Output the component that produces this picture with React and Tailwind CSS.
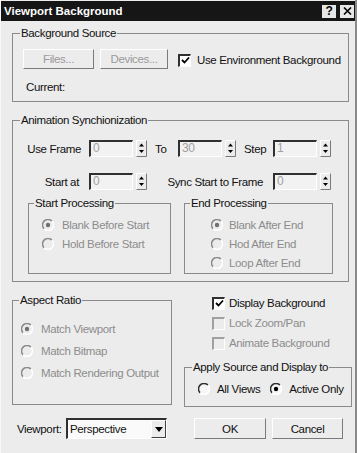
import React from "react";

const FONT = { fontFamily: '"Liberation Sans", Arial, sans-serif' };

function Radio({ checked, disabled }) {
  const dark = disabled ? "#8a8a8a" : "#303030";
  return (
    <svg width="12" height="12" viewBox="0 0 12 12" className="shrink-0">
      <circle cx="6" cy="6" r="5" fill={disabled ? "#ececec" : "#f6f6f6"} />
      <path d="M9.9 2.1 A5.5 5.5 0 0 0 2.1 9.9" stroke={dark} strokeWidth="1.5" fill="none" />
      <path d="M9.9 2.1 A5.5 5.5 0 0 1 2.1 9.9" stroke="#ffffff" strokeWidth="1.5" fill="none" />
      {checked && <circle cx="6" cy="6" r="2.2" fill={disabled ? "#707070" : "#000000"} />}
    </svg>
  );
}

function Check({ checked, disabled }) {
  return (
    <div
      className={
        disabled
          ? "w-[13px] h-[13px] shrink-0 border-t-2 border-l-2 border-b border-r border-t-[#a0a0a0] border-l-[#a0a0a0] border-b-white border-r-white bg-[#ececec]"
          : "w-[13px] h-[13px] shrink-0 border-t-2 border-l-2 border-b border-r border-t-[#303030] border-l-[#303030] border-b-white border-r-white bg-white flex items-center justify-center"
      }
    >
      {checked && (
        <svg width="9" height="9" viewBox="0 0 9 9">
          <path d="M1 4 L3.5 6.5 L8 1.5" stroke="#000" strokeWidth="1.8" fill="none" />
        </svg>
      )}
    </div>
  );
}

function Arrows() {
  return (
    <svg width="11" height="17" viewBox="0 0 11 17" className="shrink-0">
      <rect x="0" y="0" width="11" height="17" fill="#ececec" />
      <path d="M0.5 16.5 V0.5 H10.5" stroke="#ffffff" fill="none" />
      <path d="M10.5 0.5 V16.5 H0.5" stroke="#7a7a7a" fill="none" />
      <path d="M5.5 3.5 L8 6.5 H3 Z" fill="#000" />
      <path d="M3 10 H8 L5.5 13 Z" fill="#000" />
    </svg>
  );
}

function Spinner({ value }) {
  return (
    <div className="flex items-center gap-[3px] shrink-0">
      <div className="w-[44px] h-[17px] border-t-2 border-l-2 border-b border-r border-t-[#303030] border-l-[#303030] border-b-white border-r-white bg-[#f2f2f2] text-[#a0a0a0] text-[12px] leading-[12px] pl-[2px]">
        {value}
      </div>
      <Arrows />
    </div>
  );
}

function Btn({ children, w, disabled }) {
  return (
    <div
      className={`${w} h-[20px] shrink-0 flex items-center justify-center border border-t-white border-l-white border-b-[#7a7a7a] border-r-[#7a7a7a] bg-[#ececec] ${
        disabled ? "text-[#9a9a9a]" : "text-[#111111]"
      }`}
    >
      {children}
    </div>
  );
}

export default function App() {
  return (
    <div
      style={FONT}
      className="w-[357px] h-[453px] bg-[#ececec] overflow-hidden flex flex-col text-[11.5px] tracking-[-0.35px] leading-[14px] whitespace-nowrap text-[#111111] border-l border-l-[#f8f8f8] border-r-2 border-r-[#8a8a8a]"
    >
      {/* Title bar */}
      <div className="mt-[1px] h-[20px] bg-[#161616] flex items-center pl-[3px] pr-[1px] shrink-0">
        <span className="text-white font-bold text-[11.5px] tracking-normal flex-1">Viewport Background</span>
        <div className="w-[14px] h-[13px] bg-[#e6e6e6] flex items-center justify-center text-black font-bold text-[12px] leading-[12px]">
          ?
        </div>
        <div className="ml-[4px] w-[14px] h-[13px] bg-[#e6e6e6] flex items-center justify-center">
          <svg width="9" height="8" viewBox="0 0 9 8">
            <path d="M1 0.5 L8 7.5 M8 0.5 L1 7.5" stroke="#000" strokeWidth="1.6" />
          </svg>
        </div>
      </div>

      <div className="pl-[11px] pr-[6px] pt-[5px] flex flex-col">
        {/* Background Source */}
        <fieldset className="h-[76px] border border-[#8a8a8a] px-[7px]">
          <legend className="px-[1px] leading-[14px]">Background Source</legend>
          <div className="ml-[3px] mt-[9px] flex items-center">
            <Btn w="w-[71px]" disabled>Files...</Btn>
            <div className="ml-[6px]">
              <Btn w="w-[68px]" disabled>Devices...</Btn>
            </div>
            <div className="ml-[10px] mt-[2px]">
              <Check checked />
            </div>
            <span className="ml-[6px] mt-[2px]">Use Environment Background</span>
          </div>
          <div className="ml-[6px] mt-[11px]">Current:</div>
        </fieldset>

        {/* Animation Synchronization */}
        <fieldset className="mt-[11px] h-[169px] border border-[#8a8a8a] px-[7px]">
          <legend className="px-[1px] leading-[14px]">Animation Synchionization</legend>
          <div className="mt-[13px] flex items-center">
            <span className="w-[61px] text-right">Use Frame</span>
            <span className="ml-[8px]">
              <Spinner value="0" />
            </span>
            <span className="w-[31px] pl-[8px]">To</span>
            <Spinner value="30" />
            <span className="w-[37px] pl-[8px]">Step</span>
            <Spinner value="1" />
          </div>
          <div className="mt-[16px] flex items-center">
            <span className="w-[59px] text-right">Start at</span>
            <span className="ml-[10px]">
              <Spinner value="0" />
            </span>
            <span className="w-[126px] text-right pr-[10px]">Sync Start to Frame</span>
            <Spinner value="0" />
          </div>
          <div className="mt-[6px] flex">
            <fieldset className="ml-[8px] w-[143px] h-[78px] border border-[#8a8a8a] px-[5px]">
              <legend className="px-[1px] leading-[14px]">Start Processing</legend>
              <div className="mt-[5px] flex flex-col text-[#8c8c8c]">
                <div className="h-[19px] flex items-center pl-[8px] gap-[8px]">
                  <Radio checked disabled />
                  <span>Blank Before Start</span>
                </div>
                <div className="h-[19px] flex items-center pl-[8px] gap-[8px]">
                  <Radio disabled />
                  <span>Hold Before Start</span>
                </div>
              </div>
            </fieldset>
            <fieldset className="ml-[13px] w-[149px] h-[78px] border border-[#8a8a8a] px-[5px]">
              <legend className="px-[1px] leading-[14px]">End Processing</legend>
              <div className="mt-[5px] flex flex-col text-[#8c8c8c]">
                <div className="h-[19px] flex items-center pl-[21px] gap-[6px]">
                  <Radio checked disabled />
                  <span>Blank After End</span>
                </div>
                <div className="h-[19px] flex items-center pl-[21px] gap-[6px]">
                  <Radio disabled />
                  <span>Hod After End</span>
                </div>
                <div className="h-[19px] flex items-center pl-[21px] gap-[6px]">
                  <Radio disabled />
                  <span>Loop After End</span>
                </div>
              </div>
            </fieldset>
          </div>
        </fieldset>

        {/* Row 3 */}
        <div className="mt-[11px] flex">
          <fieldset className="w-[160px] h-[112px] border border-[#8a8a8a] px-[6px] shrink-0">
            <legend className="px-[1px] leading-[14px]">Aspect Ratio</legend>
            <div className="mt-[11px] flex flex-col text-[#8c8c8c]">
              <div className="h-[22px] flex items-center pl-[2px] gap-[8px]">
                <Radio checked disabled />
                <span>Match Viewport</span>
              </div>
              <div className="h-[22px] flex items-center pl-[2px] gap-[8px]">
                <Radio disabled />
                <span>Match Bitmap</span>
              </div>
              <div className="h-[22px] flex items-center pl-[2px] gap-[8px]">
                <Radio disabled />
                <span>Match Rendering Output</span>
              </div>
            </div>
          </fieldset>
          <div className="ml-[12px] flex flex-col">
            <div className="flex flex-col pl-[28px]">
              <div className="h-[20px] flex items-center gap-[4px]">
                <Check checked />
                <span>Display Background</span>
              </div>
              <div className="h-[20px] flex items-center gap-[4px] text-[#8c8c8c]">
                <Check disabled />
                <span>Lock Zoom/Pan</span>
              </div>
              <div className="h-[20px] flex items-center gap-[4px] text-[#8c8c8c]">
                <Check disabled />
                <span>Animate Background</span>
              </div>
            </div>
            <fieldset className="mt-[7px] w-[165px] h-[47px] border border-[#8a8a8a] px-[7px]">
              <legend className="px-[1px] leading-[14px]">Apply Source and Display to</legend>
              <div className="mt-[7px] flex items-center h-[16px]">
                <span className="ml-[6px]">
                  <Radio />
                </span>
                <span className="ml-[7px]">All Views</span>
                <span className="ml-[10px]">
                  <Radio checked />
                </span>
                <span className="ml-[7px]">Active Only</span>
              </div>
            </fieldset>
          </div>
        </div>

        {/* Bottom row */}
        <div className="mt-[11px] flex items-center">
          <span className="ml-[5px] w-[49px]">Viewport:</span>
          <div className="w-[101px] h-[21px] flex border-t-2 border-l-2 border-b border-r border-t-[#303030] border-l-[#303030] border-b-white border-r-white bg-[#fafafa]">
            <span className="flex-1 pl-[2px] leading-[18px] text-[#111]">Perspective</span>
            <div className="w-[15px] h-full flex items-center justify-center border border-t-white border-l-white border-b-[#404040] border-r-[#404040] bg-[#ececec]">
              <svg width="8" height="5" viewBox="0 0 8 5">
                <path d="M0 0 H8 L4 5 Z" fill="#000" />
              </svg>
            </div>
          </div>
          <div className="ml-[27px] flex gap-[6px]">
            <div className="w-[72px] h-[21px] flex items-center justify-center border border-t-white border-l-white border-b-[#7a7a7a] border-r-[#7a7a7a]">
              OK
            </div>
            <div className="w-[71px] h-[21px] flex items-center justify-center border border-t-white border-l-white border-b-[#7a7a7a] border-r-[#7a7a7a]">
              Cancel
            </div>
          </div>
        </div>
      </div>
    </div>
  );
}
